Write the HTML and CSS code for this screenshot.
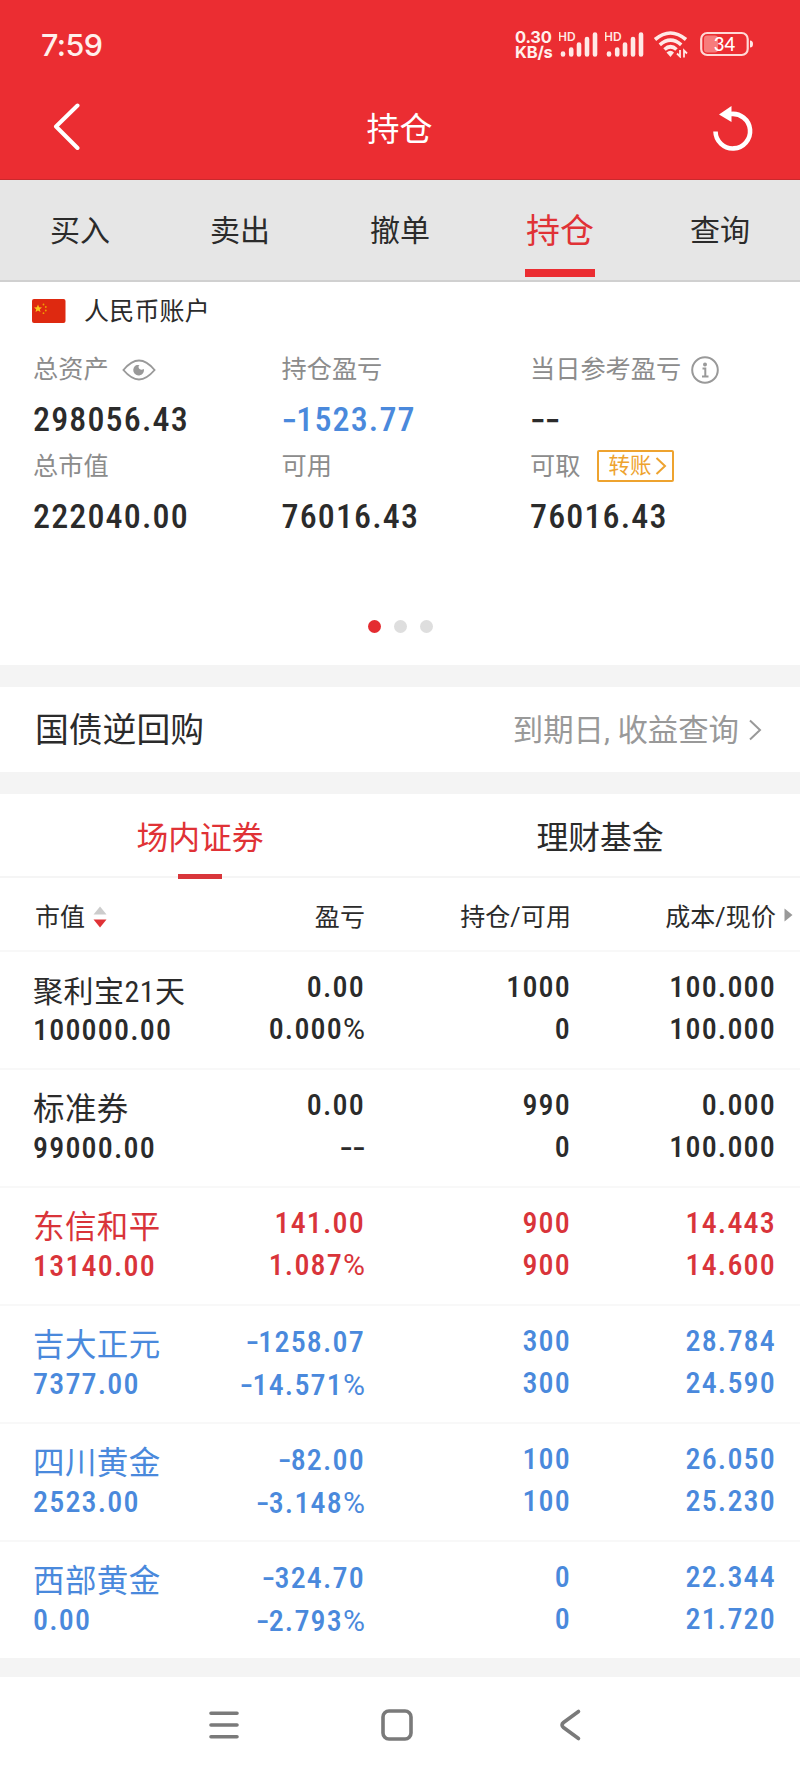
FILE: index.html
```html
<!DOCTYPE html>
<html lang="zh-CN">
<head>
    <meta charset="UTF-8">
    <meta name="viewport" content="width=device-width, initial-scale=1.0">
    <title>持仓</title>
    <link rel="stylesheet" href="styles.css">
</head>
<body>
    <header class="header">
        <div class="status-bar">
            <span class="time">7:59</span>
            <div class="status-icons">
                <div class="speed">0.30<br>KB/s</div>
                <svg class="signal" width="40" height="28" viewBox="0 0 40 28">
                    <text x="-1" y="10.500">HD</text>
                    <path d="M4 23.500v1M12.200 19.500v5M20 14.500v10M28 9v15.500M36 4.500v20" />
                </svg>
                <svg class="signal second" width="40" height="28" viewBox="0 0 40 28">
                    <text x="-1" y="10.500">HD</text>
                    <path d="M4 23.500v1M12.200 19.500v5M20 14.500v10M28 9v15.500M36 4.500v20" />
                </svg>
                <svg class="wifi" width="36" height="28" viewBox="0 0 36 28">
                    <path class="arc" d="M2 9.500Q17.500-3.500 33 9.500M6.800 14.800Q17.500 5.500 28.200 14.800M11.500 19.500Q17.500 14 23.500 19.500" />
                    <path class="fill" d="M13.500 22.500Q17.500 19 21 22.500L17.500 27Z" />
                    <path class="data" d="M27 20v6.500l-3-3M31 27.500v-7l3 3" />
                </svg>
                <svg class="battery" width="54" height="26" viewBox="0 0 54 26">
                    <rect class="level" x="4" y="4.500" width="14" height="17" rx="3" />
                    <rect class="shell" x="1.200" y="2" width="46.500" height="22" rx="6" />
                    <path class="tip" d="M50 9.500q3 0 3 3.500t-3 3.500z" />
                    <text x="24.500" y="19.500" text-anchor="middle">34</text>
                </svg>
            </div>
        </div>
        <div class="title-bar">
            <svg class="back" width="30" height="48" viewBox="0 0 30 48">
                <path d="M25.500 3.500L4 24.500L25.500 46" />
            </svg>
            <h1>持仓</h1>
            <svg class="refresh" width="42" height="46" viewBox="0 0 42 46">
                <path class="ring" d="M3.500 25.500A17.300 17.300 0 1 0 18.500 8" />
                <path class="head" d="M7 8.500L19.500 0V16Z" />
            </svg>
        </div>
    </header>

    <nav class="tabs">
        <a>买入</a>
        <a>卖出</a>
        <a>撤单</a>
        <a class="active">持仓</a>
        <a>查询</a>
    </nav>

    <section class="account">
        <div class="account-name">
            <svg width="34" height="24" viewBox="0 0 34 24">
                <rect width="33.500" height="24" rx="2" fill="#de2910" />
                <path d="M6 5.500l1.100 2.700 2.900.2-2.200 1.900.7 2.800L6 11.600l-2.500 1.500.7-2.800L2 8.400l2.900-.2z" fill="#f9c51d" />
                <g fill="#f0a000">
                    <circle cx="11.500" cy="5.500" r="0.900" />
                    <circle cx="13.800" cy="8" r="0.900" />
                    <circle cx="13.800" cy="11.500" r="0.900" />
                    <circle cx="11.500" cy="14.200" r="0.900" />
                </g>
            </svg>
            <span>人民币账户</span>
        </div>
        <div class="summary">
            <div class="item">
                <div class="label">总资产
                    <svg class="eye" width="34" height="24" viewBox="0 0 36 24">
                        <path d="M1.500 12Q10 2 18 2T34.500 12Q26 22 18 22T1.500 12Z" fill="none" stroke="#999" stroke-width="2" />
                        <path d="M15.500 6.800A5.700 5.700 0 1 0 23.200 11Q19.500 12.500 18 10.500T18.500 7Q17 6.300 15.500 6.800Z" fill="#999" />
                    </svg>
                </div>
                <div class="value">298056.43</div>
            </div>
            <div class="item">
                <div class="label">持仓盈亏</div>
                <div class="value down"><i>-</i>1523.77</div>
            </div>
            <div class="item">
                <div class="label">当日参考盈亏
                    <svg class="info" width="28" height="28" viewBox="0 0 28 28">
                        <circle cx="14" cy="14" r="12.800" fill="none" stroke="#999" stroke-width="2" />
                        <circle cx="14" cy="8.500" r="2" fill="#999" />
                        <path d="M11.500 12.500H14.300V20.500M11 20.500H17.500" fill="none" stroke="#999" stroke-width="2" />
                    </svg>
                </div>
                <div class="value"><i>--</i></div>
            </div>
            <div class="item">
                <div class="label">总市值</div>
                <div class="value">222040.00</div>
            </div>
            <div class="item">
                <div class="label">可用</div>
                <div class="value">76016.43</div>
            </div>
            <div class="item">
                <div class="label">可取
                    <span class="transfer">转账
                        <svg width="12" height="20" viewBox="0 0 12 20">
                            <path d="M1.500 2L10 10L1.500 18" fill="none" stroke="#eea32f" stroke-width="2" />
                        </svg>
                    </span>
                </div>
                <div class="value">76016.43</div>
            </div>
        </div>
        <div class="dots">
            <i class="on"></i><i></i><i></i>
        </div>
    </section>

    <section class="repo">
        <span class="repo-title">国债逆回购</span>
        <span class="repo-link">到期日, 收益查询</span>
        <svg width="14" height="24" viewBox="0 0 14 24">
            <path d="M2 2.500L12 12L2 21.500" fill="none" stroke="#999" stroke-width="2" />
        </svg>
    </section>

    <section class="holdings">
        <div class="sub-tabs">
            <a class="active">场内证券</a>
            <a>理财基金</a>
        </div>
        <div class="row head">
            <span class="sort">市值
                <svg width="14" height="22" viewBox="0 0 14 22">
                    <path d="M0.500 8.500L7 0.500L13.500 8.500Z" fill="#ccc" />
                    <path d="M0.500 13.500H13.500L7 21.500Z" fill="#e03236" />
                </svg>
            </span>
            <span>盈亏</span>
            <span>持仓/可用</span>
            <span>成本/现价</span>
            <svg class="more" width="9" height="14" viewBox="0 0 9 14">
                <path d="M0.500 0.500L8.500 7L0.500 13.500Z" fill="#999" />
            </svg>
        </div>
        <div class="row">
            <div class="stock"><b class="small">聚利宝21天</b><span>100000.00</span></div>
            <div><span>0.00</span><span>0.000<em>%</em></span></div>
            <div><span>1000</span><span>0</span></div>
            <div><span>100.000</span><span>100.000</span></div>
        </div>
        <div class="row">
            <div class="stock"><b>标准券</b><span>99000.00</span></div>
            <div><span>0.00</span><span><i>--</i></span></div>
            <div><span>990</span><span>0</span></div>
            <div><span>0.000</span><span>100.000</span></div>
        </div>
        <div class="row up">
            <div class="stock"><b>东信和平</b><span>13140.00</span></div>
            <div><span>141.00</span><span>1.087<em>%</em></span></div>
            <div><span>900</span><span>900</span></div>
            <div><span>14.443</span><span>14.600</span></div>
        </div>
        <div class="row down">
            <div class="stock"><b>吉大正元</b><span>7377.00</span></div>
            <div><span><i>-</i>1258.07</span><span><i>-</i>14.571<em>%</em></span></div>
            <div><span>300</span><span>300</span></div>
            <div><span>28.784</span><span>24.590</span></div>
        </div>
        <div class="row down">
            <div class="stock"><b>四川黄金</b><span>2523.00</span></div>
            <div><span><i>-</i>82.00</span><span><i>-</i>3.148<em>%</em></span></div>
            <div><span>100</span><span>100</span></div>
            <div><span>26.050</span><span>25.230</span></div>
        </div>
        <div class="row down">
            <div class="stock"><b>西部黄金</b><span>0.00</span></div>
            <div><span><i>-</i>324.70</span><span><i>-</i>2.793<em>%</em></span></div>
            <div><span>0</span><span>0</span></div>
            <div><span>22.344</span><span>21.720</span></div>
        </div>
    </section>

    <footer class="nav-bar">
        <svg width="34" height="34" viewBox="0 0 34 34">
            <path d="M4 5.200H30M4 17H30M4 28.800H30" />
        </svg>
        <svg width="34" height="34" viewBox="0 0 34 34">
            <rect x="3" y="3" width="28" height="28" rx="6" />
        </svg>
        <svg width="34" height="34" viewBox="0 0 34 34">
            <path d="M25.500 3.500L10.500 14.500Q7.500 17 10.500 19.500L25.500 30.500" />
        </svg>
    </footer>
</body>
</html>
```
FILE: styles.css
```css
* {
    box-sizing: border-box;
}
body {
    margin: 0;
    width: 800px;
    height: 1778px;
    background: #f4f4f4;
    color: #2b2b2b;
    font-family: Roboto, "Noto Sans CJK SC", sans-serif;
    display: flex;
    flex-direction: column;
    overflow: hidden;
}
svg {
    display: block;
    flex: none;
}
.header {
    height: 180px;
    background: #eb2d32;
    border-bottom: 1px solid #c9292d;
    color: #fff;
}
.status-bar {
    height: 88px;
    padding: 0 46px 0 41px;
    display: flex;
    align-items: center;
    justify-content: space-between;
}
.time {
    font-family: Inter, sans-serif;
    font-size: 30.5px;
    font-weight: 500;
    letter-spacing: -0.6px;
    color: #fff0ec;
}
.status-icons {
    display: flex;
    align-items: center;
    color: #fff0ec;
}
.speed {
    width: 44px;
    padding-top: 2px;
    font: 700 16.5px/15.500px Inter, sans-serif;
    letter-spacing: -0.2px;
}
.signal path {
    fill: none;
    stroke: #ffe9e6;
    stroke-width: 4.6;
    stroke-linecap: round;
}
.signal text {
    font: 600 12px Inter, sans-serif;
    fill: #ffe9e6;
}
.second {
    margin-left: 6px;
}
.wifi {
    margin-left: 8px;
}
.wifi .arc {
    fill: none;
    stroke: #ffe9e6;
    stroke-width: 3.6;
}
.wifi .fill {
    fill: #ffe9e6;
}
.wifi .data {
    fill: none;
    stroke: #ffe9e6;
    stroke-width: 1.8;
}
.battery {
    margin-left: 11px;
}
.battery .level {
    fill: #f77c7c;
}
.battery .shell {
    fill: none;
    stroke: #ffd9d6;
    stroke-width: 2.2;
}
.battery .tip {
    fill: #ffe9e6;
}
.battery text {
    font: 500 18.5px Lato, sans-serif;
    fill: #fff;
}
.title-bar {
    height: 76px;
    padding: 0 46px 0 52px;
    display: flex;
    align-items: center;
    justify-content: space-between;
}
.back path {
    fill: none;
    stroke: #fff;
    stroke-width: 4;
    stroke-linecap: round;
    stroke-linejoin: round;
}
.title-bar h1 {
    margin: 2px 0 0 5px;
    font-size: 33px;
    font-weight: 400;
}
.refresh {
    margin-top: 6px;
}
.refresh .ring {
    fill: none;
    stroke: #fff;
    stroke-width: 4.6;
}
.refresh .head {
    fill: #fff;
}
.tabs {
    height: 102px;
    background: #e6e6e6;
    border-bottom: 2px solid #d0d0d0;
    display: flex;
}
.tabs a {
    flex: 1;
    display: flex;
    flex-direction: column;
    align-items: center;
    font-size: 30px;
    line-height: 102px;
}
.tabs .active {
    font-size: 34px;
    color: #e03236;
}
.tabs .active::after {
    content: "";
    width: 70px;
    height: 8px;
    margin-top: -13px;
    background: #eb2d32;
}
.account {
    height: 383px;
    background: #fff;
    padding: 12px 0 0 32px;
}
.account-name {
    height: 34px;
    display: flex;
    align-items: center;
    gap: 18px;
    font-size: 25px;
    line-height: 34px;
}
.account-name span {
    padding-top: 1px;
    letter-spacing: 0.2px;
}
.summary {
    margin-top: 20px;
    padding-left: 1px;
    display: grid;
    grid-template-columns: 248.5px 248.5px 1fr;
}
.item {
    height: 96.5px;
}
.label {
    height: 43px;
    display: flex;
    align-items: center;
    font-size: 25.2px;
    line-height: 43px;
    color: #8c8c8c;
}
.eye {
    margin-left: 13px;
}
.info {
    margin-left: 10px;
}
.value {
    font-size: 34px;
    font-weight: 500;
    font-stretch: 85%;
    letter-spacing: 1.15px;
    line-height: 56px;
}
.value i,
.row i {
    font-family: Inter, sans-serif;
    font-style: normal;
    letter-spacing: -1px;
}
.transfer {
    width: 77px;
    height: 32px;
    margin-left: 17px;
    padding-left: 9px;
    border: 2px solid #eea32f;
    border-radius: 2px;
    color: #eea32f;
    font-size: 21.5px;
    line-height: 28px;
    display: flex;
    align-items: center;
    gap: 4px;
}
.dots {
    margin: 79px 0 0 -32px;
    display: flex;
    justify-content: center;
    gap: 13px;
}
.dots i {
    width: 13px;
    height: 13px;
    border-radius: 50%;
    background: #dedede;
}
.dots .on {
    background: #e42c31;
}
.repo {
    height: 85px;
    margin-top: 22px;
    padding: 0 38px 0 35px;
    background: #fff;
    display: flex;
    align-items: center;
}
.repo-title {
    flex: 1;
    padding-bottom: 4px;
    font-size: 33.8px;
}
.repo-link {
    margin-right: 9px;
    padding-bottom: 4px;
    font-size: 30.4px;
    color: #999;
}
.holdings {
    margin-top: 22px;
    background: #fff;
}
.sub-tabs {
    height: 84px;
    border-bottom: 2px solid #f5f5f5;
    display: flex;
}
.sub-tabs a {
    flex: 1;
    display: flex;
    flex-direction: column;
    align-items: center;
    font-size: 31.8px;
    line-height: 88px;
}
.sub-tabs .active {
    color: #e03236;
}
.sub-tabs .active::after {
    content: "";
    flex: none;
    width: 44px;
    height: 5px;
    margin-top: -8px;
    background: #d9363b;
}
.row {
    height: 118px;
    padding-left: 33px;
    border-bottom: 2px solid #f8f8f8;
    display: grid;
    grid-template-columns: 180px 152px 206px 205px 1fr;
    font-size: 30px;
    font-weight: 500;
    font-stretch: 85%;
    letter-spacing: 1.2px;
    text-align: right;
}
.row:last-child {
    height: 116px;
    border-bottom: none;
}
.row div {
    padding-top: 13.500px;
}
.row div span {
    display: block;
    line-height: 42.500px;
    white-space: nowrap;
}
.row .stock {
    text-align: left;
    padding-top: 18px;
}
.row .stock b {
    display: block;
    font-size: 31.5px;
    font-weight: 400;
    letter-spacing: 0.4px;
    line-height: 44px;
}
.row .stock b.small {
    font-size: 30px;
    letter-spacing: 0.5px;
}
.row .stock span {
    line-height: 32px;
}
.row em {
    font-style: normal;
    font-weight: 400;
    font-stretch: 100%;
    letter-spacing: 0;
}
.row.head {
    height: 74px;
    padding-top: 2px;
    align-items: center;
    font-size: 25px;
    font-weight: 400;
    font-stretch: 100%;
    letter-spacing: 0.1px;
}
.sort {
    padding-left: 2px;
    display: flex;
    align-items: center;
    gap: 8px;
}
.sort svg {
    margin-top: 4px;
}
.more {
    margin-left: 8px;
}
.up {
    color: #d9343a;
}
.down {
    color: #4a89dc;
}
.nav-bar {
    flex: 1;
    margin-top: 19px;
    padding: 0 6px 5px 0;
    background: #fff;
    display: flex;
    align-items: center;
    justify-content: center;
    gap: 139px;
}
.nav-bar svg {
    fill: none;
    stroke: #7a7a7a;
    stroke-width: 3.6;
    stroke-linecap: round;
}
```
